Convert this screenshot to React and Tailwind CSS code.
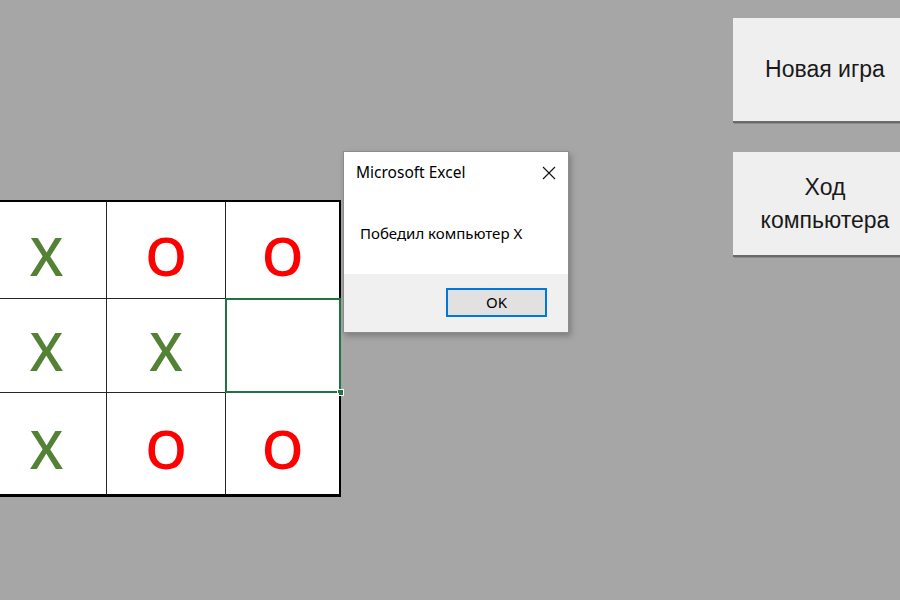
import React from 'react';

const board = [
  ['X', 'O', 'O'],
  ['X', 'X', ''],
  ['X', 'O', 'O'],
];

function Cell({ value, col, row, selected }) {
  const right = col < 2 ? 'border-r border-[#262626]' : '';
  const bottom = row < 2 ? 'border-b border-[#262626]' : '';
  return (
    <div className={`relative flex items-center justify-center pt-[10px] bg-white ${right} ${bottom}`}>
      {value === 'X' && <span className="text-[53px] leading-none font-semibold text-[#548235]">X</span>}
      {value === 'O' && <span className="text-[53px] leading-none font-semibold text-[#ff0000]">O</span>}
      {selected && (
        <div className="absolute -left-px -top-px -right-[2px] -bottom-px border-2 border-[#217346]">
          <div className="absolute -right-[5px] -bottom-[5px] w-[7px] h-[7px] bg-[#217346] border border-white" />
        </div>
      )}
    </div>
  );
}

function SheetButton({ children }) {
  return (
    <div className="w-[184px] h-[105px] flex items-center justify-center text-center bg-[#efefef] border-b-2 border-[#6a6a6a] shadow-[1px_1px_0_#8a8a8a] text-[23px] leading-[33px] text-[#1a1a1a]">
      {children}
    </div>
  );
}

export default function App() {
  return (
    <div
      className="relative w-[900px] h-[600px] overflow-hidden bg-[#a6a6a6] flex"
      style={{ fontFamily: '"Liberation Sans", Arial, sans-serif' }}
    >
      {/* Board */}
      <div className="pt-[200px] shrink-0 -ml-[13px]" style={{ fontFamily: '"Open Sans", "Liberation Sans", sans-serif' }}>
        <div className="grid grid-cols-[120px_119px_113px] grid-rows-[97px_94px_101px] border-t-2 border-r-2 border-b-[3px] border-black">
          {board.map((r, ri) =>
            r.map((v, ci) => (
              <Cell key={`${ri}-${ci}`} value={v} col={ci} row={ri} selected={ri === 1 && ci === 2} />
            ))
          )}
        </div>
      </div>

      {/* Buttons */}
      <div className="shrink-0 ml-[392px] pt-[18px] flex flex-col gap-[29px]">
        <SheetButton>Новая игра</SheetButton>
        <SheetButton>
          Ход
          <br />
          компьютера
        </SheetButton>
      </div>

      {/* Message box */}
      <div
        className="absolute left-[343px] top-[151px] w-[226px] h-[182px] bg-white border border-[#8c8c8c] shadow-[2px_3px_6px_rgba(0,0,0,0.25)] flex flex-col"
        style={{ fontFamily: '"Noto Sans", "Open Sans", sans-serif' }}
      >
        <div className="h-[40px] flex items-center justify-between pl-[12px] pr-[12px] pt-[1px]">
          <span className="text-[15.5px] text-black">Microsoft Excel</span>
          <svg width="14" height="14" viewBox="0 0 14 14" className="mt-[1px]">
            <path d="M1 1 L13 13 M13 1 L1 13" stroke="#111" strokeWidth="1.1" />
          </svg>
        </div>
        <div className="h-[82px] flex items-center pl-[16px] text-[15px] text-black">Победил компьютер X</div>
        <div className="flex-1 bg-[#f0f0f0] flex items-start justify-end pt-[14px] pr-[21px]">
          <div className="w-[101px] h-[29px] bg-[#e1e1e1] border-2 border-[#0078d7] flex items-center justify-center text-[15px] text-black">
            OK
          </div>
        </div>
      </div>
    </div>
  );
}
